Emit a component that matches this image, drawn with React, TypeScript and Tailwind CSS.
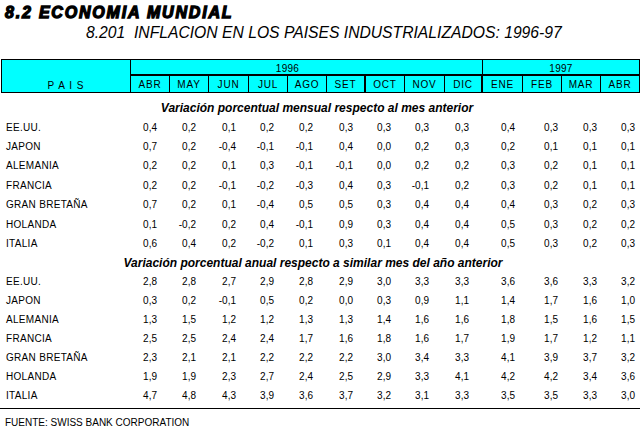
import React from "react";

const months96 = ["ABR", "MAY", "JUN", "JUL", "AGO", "SET", "OCT", "NOV", "DIC"];
const months97 = ["ENE", "FEB", "MAR", "ABR"];
const colW = ["w-[39px]", "w-[39px]", "w-[40px]", "w-[39px]", "w-[39px]", "w-[39px]", "w-[39px]", "w-[40px]", "w-[38px]", "w-[40px]", "w-[39px]", "w-[39px]", "w-[38px]"];
const padR = ["pr-[13px]", "pr-[13px]", "pr-[13px]", "pr-[14px]", "pr-[14px]", "pr-[13px]", "pr-[14px]", "pr-[16px]", "pr-[14px]", "pr-[8px]", "pr-[4px]", "pr-[4px]", "pr-[4px]"];

const mensual: [string, string[]][] = [
  ["EE.UU.", ["0,4", "0,2", "0,1", "0,2", "0,2", "0,3", "0,3", "0,3", "0,3", "0,4", "0,3", "0,3", "0,3"]],
  ["JAPON", ["0,7", "0,2", "-0,4", "-0,1", "-0,1", "0,4", "0,0", "0,2", "0,3", "0,2", "0,1", "0,1", "0,1"]],
  ["ALEMANIA", ["0,2", "0,2", "0,1", "0,3", "-0,1", "-0,1", "0,0", "0,2", "0,2", "0,3", "0,2", "0,1", "0,1"]],
  ["FRANCIA", ["0,2", "0,2", "-0,1", "-0,2", "-0,3", "0,4", "0,3", "-0,1", "0,2", "0,3", "0,2", "0,1", "0,1"]],
  ["GRAN BRETAÑA", ["0,7", "0,2", "0,1", "-0,4", "0,5", "0,5", "0,3", "0,4", "0,4", "0,4", "0,3", "0,2", "0,3"]],
  ["HOLANDA", ["0,1", "-0,2", "0,2", "0,4", "-0,1", "0,9", "0,3", "0,4", "0,4", "0,5", "0,3", "0,2", "0,2"]],
  ["ITALIA", ["0,6", "0,4", "0,2", "-0,2", "0,1", "0,3", "0,1", "0,4", "0,4", "0,5", "0,3", "0,2", "0,3"]],
];

const anual: [string, string[]][] = [
  ["EE.UU.", ["2,8", "2,8", "2,7", "2,9", "2,8", "2,9", "3,0", "3,3", "3,3", "3,6", "3,6", "3,3", "3,2"]],
  ["JAPON", ["0,3", "0,2", "-0,1", "0,5", "0,2", "0,0", "0,3", "0,9", "1,1", "1,4", "1,7", "1,6", "1,0"]],
  ["ALEMANIA", ["1,3", "1,5", "1,2", "1,2", "1,3", "1,3", "1,4", "1,6", "1,6", "1,8", "1,5", "1,6", "1,5"]],
  ["FRANCIA", ["2,5", "2,5", "2,4", "2,4", "1,7", "1,6", "1,8", "1,6", "1,7", "1,9", "1,7", "1,2", "1,1"]],
  ["GRAN BRETAÑA", ["2,3", "2,1", "2,1", "2,2", "2,2", "2,2", "3,0", "3,4", "3,3", "4,1", "3,9", "3,7", "3,2"]],
  ["HOLANDA", ["1,9", "1,9", "2,3", "2,7", "2,4", "2,5", "2,9", "3,3", "4,1", "4,2", "4,2", "3,4", "3,6"]],
  ["ITALIA", ["4,7", "4,8", "4,3", "3,9", "3,6", "3,7", "3,2", "3,1", "3,3", "3,5", "3,5", "3,3", "3,0"]],
];

function DataRows({ rows, h }: { rows: [string, string[]][]; h: string }) {
  return (
    <div className="flex flex-col pl-[2px]">
      {rows.map(([name, vals]) => (
        <div key={name} className={`flex items-center ${h}`}>
          <div className="w-[129px] pl-[4px] tracking-[0.3px]">{name}</div>
          {vals.map((v, i) => (
            <div key={i} className={`${colW[i]} ${padR[i]} text-right`}>
              {v}
            </div>
          ))}
        </div>
      ))}
    </div>
  );
}

export default function App() {
  return (
    <div
      className="w-[640px] h-[433px] bg-white text-black overflow-hidden text-[10px] leading-none"
      style={{ fontFamily: '"Liberation Sans", Arial, sans-serif' }}
    >
      {/* Titles */}
      <div className="h-[24px] pl-[5px] pt-[5px] text-[16px] font-bold italic leading-none tracking-[1.8px] [-webkit-text-stroke:1.3px_black]">
        8.2 ECONOMIA MUNDIAL
      </div>
      <div className="h-[35px] pl-[86px] pt-[1px] text-[15.7px] italic leading-none whitespace-pre">
        8.201  INFLACION EN LOS PAISES INDUSTRIALIZADOS: 1996-97
      </div>

      {/* Table header */}
      <div className="ml-[1px] w-[639px] border border-black bg-[#00ffff] flex">
        <div className="w-[129px] border-r border-black flex items-end justify-center pb-[1px] whitespace-pre tracking-[1px]">
          P A I S
        </div>
        <div className="flex flex-col w-[508px]">
          <div className="flex h-[16px] border-b-2 border-black">
            <div className="w-[352px] border-r border-black flex items-center justify-center pr-[38px] pt-[3px] tracking-[0.3px]">
              1996
            </div>
            <div className="w-[156px] flex items-center justify-center pt-[3px] tracking-[0.3px]">1997</div>
          </div>
          <div className="flex h-[16px]">
            {[...months96, ...months97].map((m, i) => (
              <div
                key={i}
                className={`${colW[i]} ${i < 12 ? "border-r border-black" : ""} ${i === 5 || i === 8 ? "border-r-2" : ""} flex items-center justify-center pt-[2px] tracking-[0.8px]`}
              >
                {m}
              </div>
            ))}
          </div>
        </div>
      </div>

      {/* Section 1 */}
      <div className="h-[25px] flex items-center justify-center pr-[6px] pt-[4px] text-[12px] font-bold italic">
        Variación porcentual mensual respecto al mes anterior
      </div>
      <DataRows rows={mensual} h="h-[19.4px]" />

      {/* Section 2 */}
      <div className="h-[18.5px] flex items-center justify-center pr-[14px] pt-[1px] text-[12px] font-bold italic">
        Variación porcentual anual respecto a similar mes del año anterior
      </div>
      <DataRows rows={anual} h="h-[19px]" />

      <div className="mt-[3px] w-[640px] border-t border-black" />
      <div className="pl-[5px] pt-[9px] text-[10px]">FUENTE: SWISS BANK CORPORATION</div>
    </div>
  );
}
